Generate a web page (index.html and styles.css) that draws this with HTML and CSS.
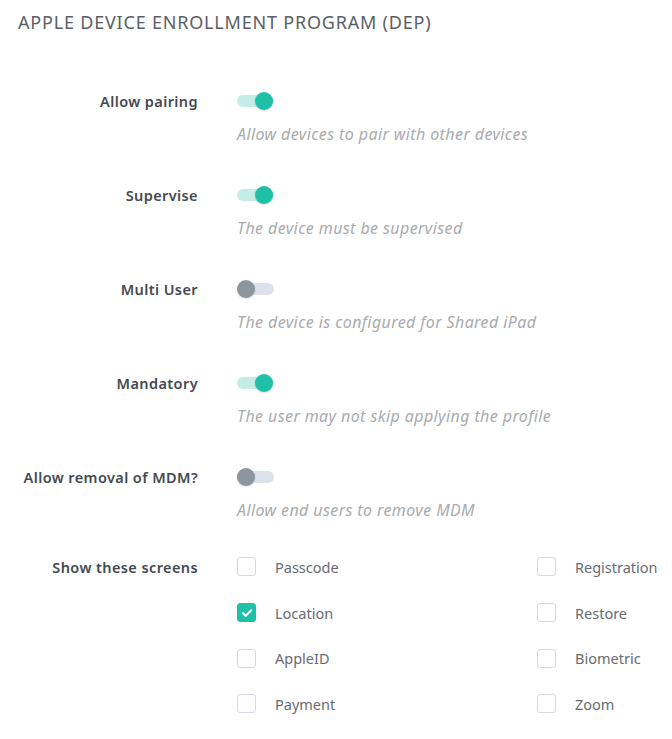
FILE: index.html
```html
<!DOCTYPE html>
<html>
<head>
<meta charset="utf-8">
<link rel="stylesheet" href="styles.css">
</head>
<body>
<div class="page">
  <h1 class="title">APPLE DEVICE ENROLLMENT PROGRAM (DEP)</h1>
  <div class="settings">
    <div class="setting">
      <div class="label">Allow pairing</div>
      <div class="control">
        <span class="toggle on"><span class="knob"></span></span>
        <div class="desc">Allow devices to pair with other devices</div>
      </div>
    </div>
    <div class="setting">
      <div class="label">Supervise</div>
      <div class="control">
        <span class="toggle on"><span class="knob"></span></span>
        <div class="desc">The device must be supervised</div>
      </div>
    </div>
    <div class="setting">
      <div class="label">Multi User</div>
      <div class="control">
        <span class="toggle"><span class="knob"></span></span>
        <div class="desc">The device is configured for Shared iPad</div>
      </div>
    </div>
    <div class="setting">
      <div class="label">Mandatory</div>
      <div class="control">
        <span class="toggle on"><span class="knob"></span></span>
        <div class="desc">The user may not skip applying the profile</div>
      </div>
    </div>
    <div class="setting">
      <div class="label">Allow removal of MDM?</div>
      <div class="control">
        <span class="toggle"><span class="knob"></span></span>
        <div class="desc">Allow end users to remove MDM</div>
      </div>
    </div>
  </div>
  <div class="screens">
    <div class="label screens-label">Show these screens</div>
    <div class="checks">
      <div class="check"><span class="box"></span><span class="ctext">Passcode</span></div>
      <div class="check"><span class="box"></span><span class="ctext">Registration</span></div>
      <div class="check"><span class="box checked"><svg width="12" height="10" viewBox="0 0 12 10"><path d="M2 5.2 L4.8 7.8 L10 2.4" fill="none" stroke="#fff" stroke-width="2.2" stroke-linecap="round" stroke-linejoin="round"/></svg></span><span class="ctext">Location</span></div>
      <div class="check"><span class="box"></span><span class="ctext">Restore</span></div>
      <div class="check"><span class="box"></span><span class="ctext">AppleID</span></div>
      <div class="check"><span class="box"></span><span class="ctext">Biometric</span></div>
      <div class="check"><span class="box"></span><span class="ctext">Payment</span></div>
      <div class="check"><span class="box"></span><span class="ctext">Zoom</span></div>
    </div>
  </div>
</div>
</body>
</html>
```
FILE: styles.css
```css
html, body {
  margin: 0;
  padding: 0;
  background: #fff;
}
body {
  font-family: "Noto Sans", "Open Sans", sans-serif;
  color: #444;
}
.page {
  padding: 10px 0 0 18px;
}
.title {
  margin: 0;
  font-size: 18px;
  line-height: 24px;
  font-weight: 400;
  color: #5a5f66;
  letter-spacing: 0.8px;
}
.settings {
  margin-top: 55px;
  display: flex;
  flex-direction: column;
  gap: 39px;
}
.setting, .screens {
  display: grid;
  grid-template-columns: 180px 1fr;
  column-gap: 39px;
}
.label {
  text-align: right;
  font-size: 14.5px;
  font-weight: 600;
  color: #454a50;
  line-height: 24px;
  white-space: nowrap;
  letter-spacing: 0.4px;
}
.control {
  display: flex;
  flex-direction: column;
  align-items: flex-start;
  gap: 11px;
}
.toggle {
  position: relative;
  display: block;
  width: 37px;
  height: 24px;
}
.toggle::before {
  content: "";
  position: absolute;
  left: 0;
  top: 6px;
  width: 37px;
  height: 12px;
  border-radius: 6px;
  background: #dde1eb;
}
.toggle.on::before {
  background: #c3ede6;
}
.knob {
  position: absolute;
  top: 3px;
  left: 0;
  width: 18px;
  height: 18px;
  border-radius: 50%;
  background: #8d969e;
  box-shadow: 0 1px 2px rgba(0, 0, 0, 0.15);
}
.toggle.on .knob {
  left: 18px;
  background: #1fc0a8;
}
.desc {
  font-size: 16px;
  line-height: 20px;
  font-style: italic;
  color: #a9abae;
  letter-spacing: 0.4px;
}
.screens {
  margin-top: 24px;
}
.screens-label {
  padding-top: 11px;
}
.checks {
  display: grid;
  grid-template-columns: 300px 1fr;
  grid-auto-rows: 45.7px;
}
.check {
  display: flex;
  align-items: center;
  gap: 19px;
}
.box {
  box-sizing: border-box;
  width: 19px;
  height: 19px;
  border: 1.5px solid #d5d9e4;
  border-radius: 3px;
  display: flex;
  align-items: center;
  justify-content: center;
  background: #fff;
}
.box.checked {
  background: #1fc0a8;
  border-color: #1fc0a8;
}
.ctext {
  font-size: 14.5px;
  color: #686c72;
}
```
